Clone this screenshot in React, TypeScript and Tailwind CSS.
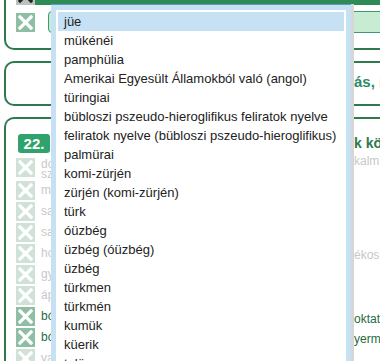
import { ReactNode } from "react";

const options = [
  "jüe",
  "mükénéi",
  "pamphülia",
  "Amerikai Egyesült Államokból való (angol)",
  "türingiai",
  "bübloszi pszeudo-hieroglifikus feliratok nyelve",
  "feliratok nyelve (bübloszi pszeudo-hieroglifikus)",
  "palmürai",
  "komi-zürjén",
  "zürjén (komi-zürjén)",
  "türk",
  "óüzbég",
  "üzbég (óüzbég)",
  "üzbég",
  "türkmen",
  "türkmén",
  "kumük",
  "küerik",
  "talüs",
];

// checkbox rows of the 22. card
const rows = [
  { text: "do", sub: "sz", dark: false },
  { text: "m", dark: false },
  { text: "sa", dark: false },
  { text: "sa", dark: false },
  { text: "ho", dark: false },
  { text: "gy", dark: false },
  { text: "áp", dark: false },
  { text: "bó", dark: true },
  { text: "bó", dark: true },
  { text: "va", dark: false },
];

function XBox({ tone }: { tone: "light" | "mid" | "dark" }) {
  const bg =
    tone === "dark" ? "bg-[#b9c2bd]" : tone === "mid" ? "bg-[#8ebfa5]" : "bg-[#d0e2d7]";
  const stroke = tone === "dark" ? "#1d2520" : "#ffffff";
  return (
    <div className={`w-[19px] h-[19px] shrink-0 flex items-center justify-center ${bg}`}>
      <svg width="15" height="15" viewBox="0 0 15 15">
        <path d="M2 2 L13 13 M13 2 L2 13" stroke={stroke} strokeWidth="3.2" strokeLinecap="square" />
      </svg>
    </div>
  );
}

function Card({ className, children }: { className?: string; children?: ReactNode }) {
  return (
    <div className={`ml-[4px] w-[400px] border-2 border-[#2e7a4e] rounded-[10px] ${className ?? ""}`}>
      {children}
    </div>
  );
}

export default function App() {
  return (
    <div className="relative w-[380px] h-[361px] overflow-hidden bg-white font-['Liberation_Sans',Arial,sans-serif]">
      {/* page behind the list */}
      <div className="flex flex-col">
        <Card className="-mt-[20px] h-[70px] border-t-0 rounded-t-none">
          <div className="flex items-start pl-[10px] pt-[6px]">
            <XBox tone="dark" />
            <div className="h-[7px] mt-[12px] flex-1 bg-[#2e8b57]" />
          </div>
          <div className="flex items-center pl-[10px] mt-[6px] gap-[13px]">
            <XBox tone="mid" />
            <div className="flex-1 h-[22px] rounded-[4px] border border-[#3a9a72] bg-[#c7ecd2]" />
          </div>
        </Card>

        <Card className="mt-[11px] h-[45px]">
          <div className="pl-[348px] pt-[8px] text-[15px] font-bold text-[#2b8a6a]">ás, m</div>
        </Card>

        <Card className="mt-[11px] h-[260px] border-b-0 rounded-b-none">
          <div className="flex items-center pl-[12px] pt-[14px]">
            <div className="w-[32px] h-[19px] rounded-[3px] bg-[#2fa36b] text-white font-bold text-[15px] leading-[19px] text-center">
              22.
            </div>
            <div className="pl-[304px] text-[14px] font-bold text-[#2e7a4e]">k kö</div>
          </div>
          <div className="flex flex-col pl-[10px] pt-[4px]">
            {rows.map((r, i) => (
              <div
                key={i}
                className={`flex items-start gap-[6px] ${r.sub ? "h-[23px]" : "h-[21px]"}`}
              >
                <XBox tone={r.dark ? "mid" : "light"} />
                <div
                  className={`text-[12px] ${r.sub ? "leading-[10px] pt-[1px]" : "leading-[19px]"} ${
                    r.dark ? "text-[#1f6a3e]" : "text-[#c8c8c8]"
                  }`}
                >
                  {r.text}
                  {r.sub && <div>{r.sub}</div>}
                </div>
              </div>
            ))}
          </div>
          <div className="absolute left-[354px] top-[152px] text-[12px] text-[#c8c8c8]">kalm</div>
          <div className="absolute left-[354px] top-[246px] text-[12px] text-[#c8c8c8]">ékos</div>
          <div className="absolute left-[354px] top-[310px] text-[12px] text-[#1f6a3e]">oktat</div>
          <div className="absolute left-[354px] top-[330px] text-[12px] text-[#1f6a3e]">yermo</div>
        </Card>
      </div>

      {/* open dropdown list */}
      <div className="absolute left-[51px] top-[4px] w-[300px] h-[370px] border-t border-[#5b9bc6] bg-[#c6e0f4] px-[5px] pt-[5px] shadow-[3px_0_0_#d6d6d6]">
        <ul className="bg-white p-[2px] h-full">
          {options.map((o, i) => (
            <li
              key={o}
              className={`h-[19px] leading-[19px] pl-[6px] text-[13px] text-[#222] whitespace-nowrap ${
                i === 0 ? "bg-[#c6e0f4]" : ""
              }`}
            >
              {o}
            </li>
          ))}
        </ul>
      </div>
    </div>
  );
}
